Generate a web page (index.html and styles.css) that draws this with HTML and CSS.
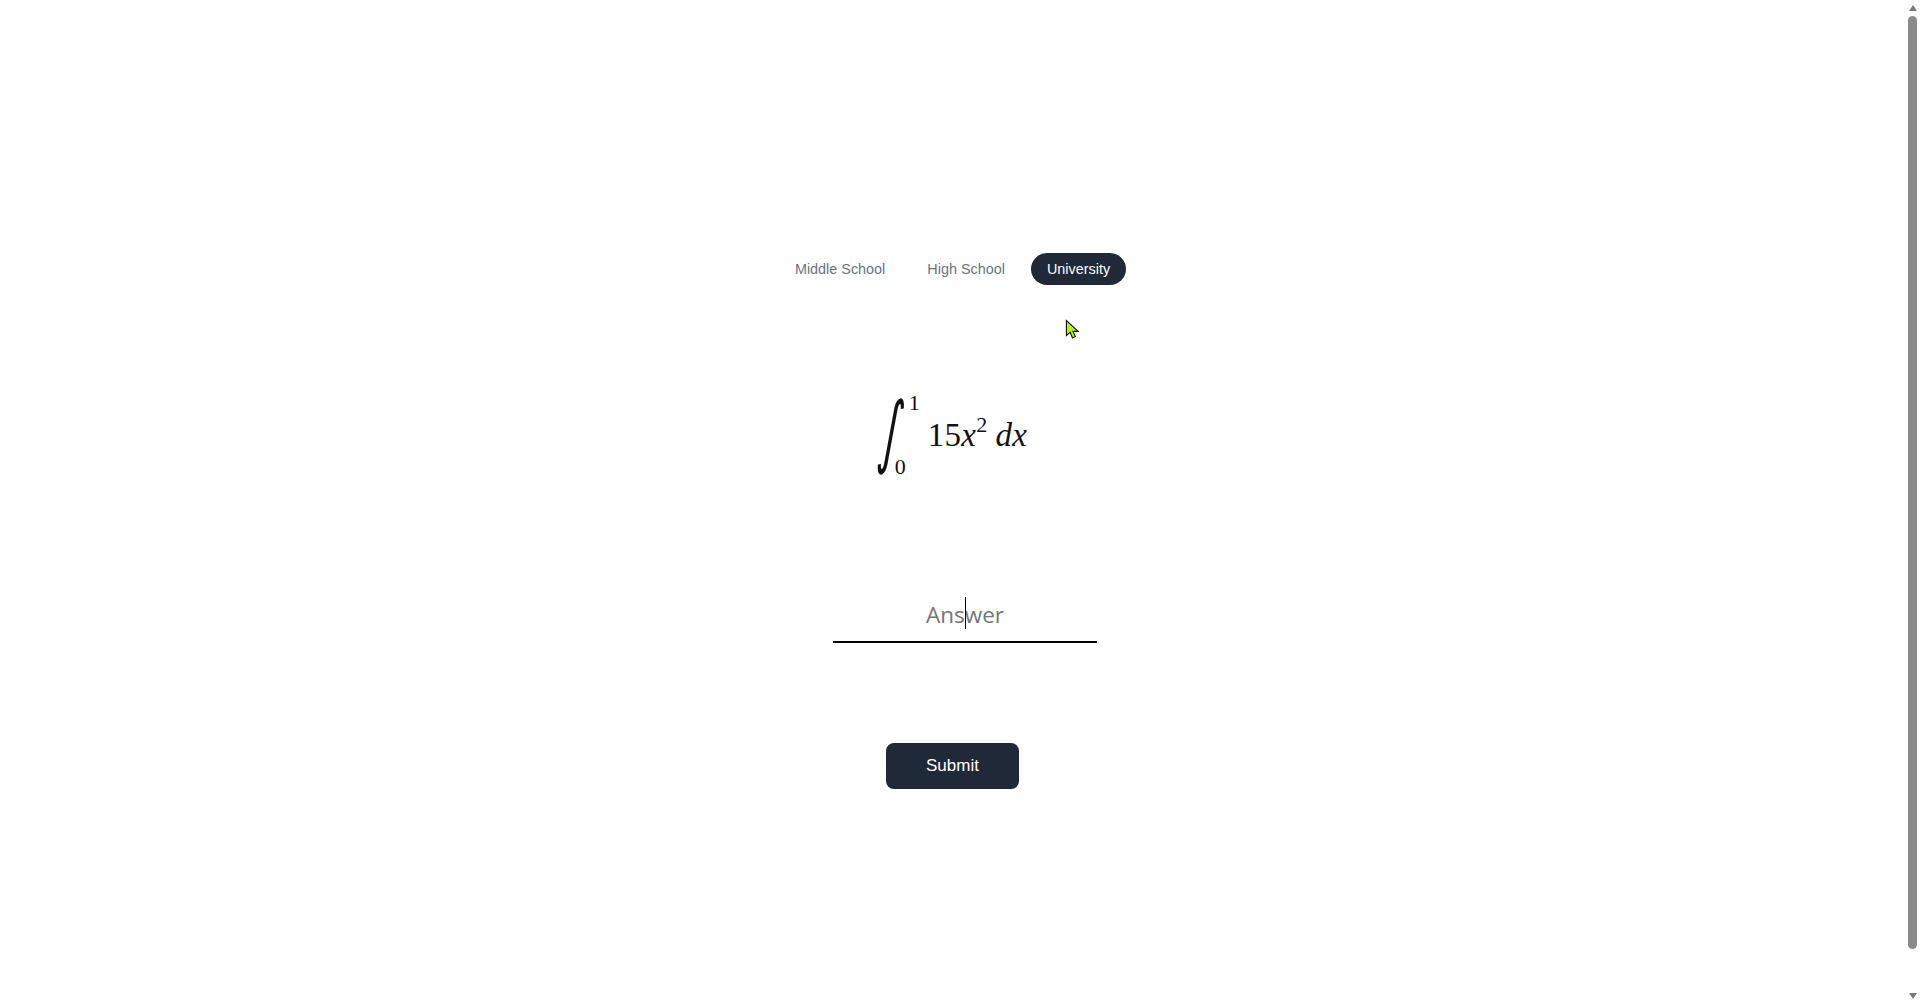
FILE: index.html
```html
<!DOCTYPE html>
<html lang="en">
<head>
<meta charset="utf-8">
<title>Math practice</title>
<link rel="stylesheet" href="styles.css">
</head>
<body>
<div class="page">
  <main class="content">
    <nav class="levels">
      <a class="level">Middle School</a>
      <a class="level">High School</a>
      <a class="level active">University</a>
    </nav>
    <div class="math">
      <span class="integral">∫</span>
      <span class="limits"><span class="upper">1</span><span class="lower">0</span></span>
      <span class="expr">15<i>x</i><sup class="pow">2</sup><i class="dx">dx</i></span>
    </div>
    <div class="answer">
      <span class="placeholder">Answer</span>
      <span class="caret"></span>
    </div>
    <button class="submit">Submit</button>
  </main>
  <aside class="scrollbar">
    <span class="arrow up"></span>
    <span class="track"><span class="thumb"></span></span>
    <span class="arrow down"></span>
  </aside>
</div>
<svg class="cursor" width="15" height="21" viewBox="0 0 16 22"><path d="M1.5 1.5 L1.5 17.5 L5.5 14 L8 20 L11 18.5 L8.5 13 L14 13 Z" fill="#b6f500" stroke="#111" stroke-width="1.2" stroke-linejoin="miter"/></svg>
</body>
</html>
```
FILE: styles.css
```css
* { box-sizing: border-box; }
html, body { margin: 0; height: 100%; overflow: hidden; background: #fff; }
.page { display: flex; height: 1004px; }
.content {
  flex: 1;
  display: flex;
  flex-direction: column;
  align-items: center;
  padding-top: 253px;
}
.levels { display: flex; gap: 10px; font: 14.4px/20px "Liberation Sans", Arial, sans-serif; }
.level { padding: 6px 16px; border-radius: 16px; color: #6b7280; }
.level.active { background: #1f2937; color: #fff; }

.math {
  display: flex;
  height: 88px;
  margin-top: 106px;
  color: #111;
  font-family: "Liberation Serif", "DejaVu Serif", serif;
}
.integral {
  font-family: "DejaVu Sans", sans-serif;
  font-size: 42px;
  line-height: 84px;
  width: 33px;
  padding-left: 2px;
  transform: skewX(-9deg) scaleY(1.88);
}
.limits { display: flex; flex-direction: column; justify-content: space-between; width: 17px; font-size: 22px; line-height: 24px; }
.upper { margin-left: -2px; }
.lower { margin-left: -16px; }
.expr { font-size: 33px; line-height: 89px; white-space: nowrap; letter-spacing: 0.3px; }
.pow { font-size: 22px; line-height: 0; vertical-align: 14px; }
.dx { margin-left: 8px; }

.answer {
  position: relative;
  width: 264px;
  height: 51px;
  margin-top: 113px;
  margin-left: 25px;
  border-bottom: 2px solid #000;
  text-align: center;
  font: 22.5px/45px "Open Sans", sans-serif;
}
.placeholder { color: #757575; }
.caret { position: absolute; left: 132px; top: 5px; width: 1px; height: 32px; background: #000; }

.submit {
  width: 133px;
  height: 46px;
  margin-top: 100px;
  border: 0;
  border-radius: 8px;
  background: #1f2937;
  color: #fff;
  font: 17px "Liberation Sans", Arial, sans-serif;
}

.scrollbar { width: 15px; padding: 0 3px; display: flex; flex-direction: column; background: #fff; }
.arrow { height: 16px; display: flex; justify-content: center; align-items: center; }
.arrow::before { content: ""; border-left: 4.5px solid transparent; border-right: 4.5px solid transparent; }
.arrow.up::before { border-bottom: 6px solid #7a7a7a; }
.arrow.down::before { border-top: 6px solid #7a7a7a; }
.track { flex: 1; display: block; }
.thumb { display: block; height: 933px; background: #8a8a8a; border-radius: 5px; }

.cursor { position: absolute; left: 1065px; top: 319px; }
```
